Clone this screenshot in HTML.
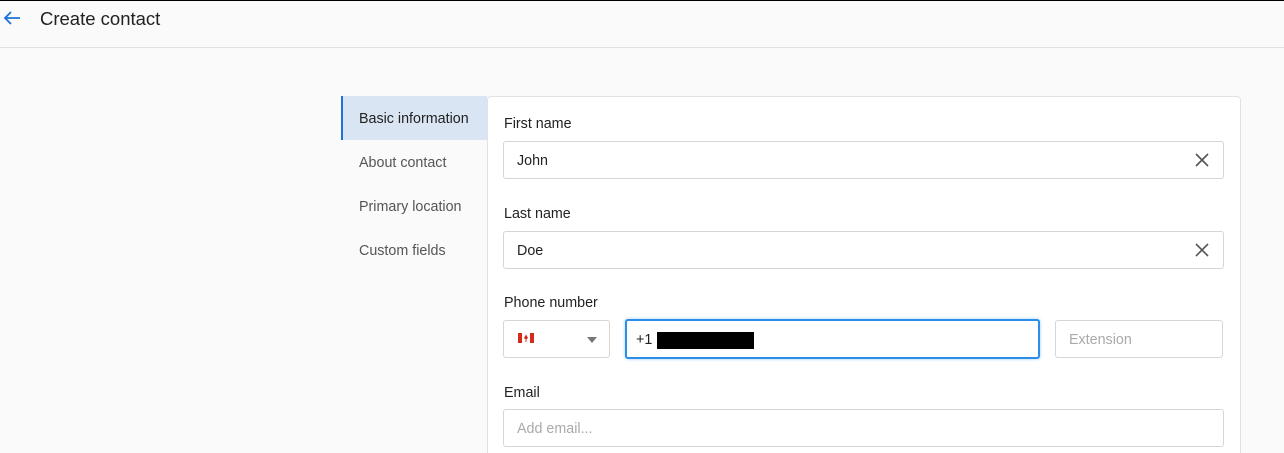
<!DOCTYPE html>
<html style="overflow:hidden;height:453px"><head><style>
*{box-sizing:border-box;margin:0;padding:0}
body{width:1284px;height:453px;overflow:hidden;background:#fafafa;font-family:"Liberation Sans",sans-serif;color:#222;position:relative}
.top{position:absolute;left:0;top:0;width:1284px;height:1px;background:#000}
.hdr{position:absolute;left:0;top:1px;width:1284px;height:47px;border-bottom:1px solid #e0e0e0}
.hdr h1{position:absolute;left:40px;top:7px;font-size:18.5px;font-weight:normal;color:#222}
.nav{position:absolute;left:341px;top:96px;width:146px}
.nav div{height:44px;line-height:46px;padding-left:18px;font-size:14.3px;color:#555}
.nav .act{background:#dae5f3;border-left:2px solid #1a73d9;padding-left:16px;color:#222}
.card{position:absolute;left:487px;top:96px;width:754px;height:370px;background:#fff;border:1px solid #e2e2e2;border-radius:4px}
.lbl{position:absolute;left:504px;font-size:14.3px;color:#222}
.in{position:absolute;height:38px;border:1px solid #d6d6d6;border-radius:3px;background:#fff;font-size:14.3px;line-height:38px;padding-left:13px}
.x{position:absolute;right:14px;top:11px}
</style></head><body>
<div class="top"></div>
<div class="hdr">
<svg style="position:absolute;left:3px;top:9px" width="18" height="16" viewBox="0 0 18 16"><path d="M17 8H2M8 2L2 8l6 6" stroke="#1a73d9" stroke-width="1.8" fill="none"/></svg>
<h1>Create contact</h1></div>
<div class="nav"><div class="act">Basic information</div><div>About contact</div><div>Primary location</div><div>Custom fields</div></div>
<div class="card"></div>
<div class="lbl" style="top:116px">First name</div>
<div class="in" style="left:503px;top:141px;width:721px">John<svg class="x" width="14" height="14" viewBox="0 0 14 14"><path d="M1 1l12 12M13 1L1 13" stroke="#555" stroke-width="1.6"/></svg></div>
<div class="lbl" style="top:206px">Last name</div>
<div class="in" style="left:503px;top:231px;width:721px">Doe<svg class="x" width="14" height="14" viewBox="0 0 14 14"><path d="M1 1l12 12M13 1L1 13" stroke="#555" stroke-width="1.6"/></svg></div>
<div class="lbl" style="top:295px">Phone number</div>
<div class="in" style="left:503px;top:320px;width:107px">
<svg style="position:absolute;left:14px;top:12px" width="16" height="10" viewBox="0 0 16 10"><rect width="16" height="10" fill="#d52b1e"/><rect x="4" width="8" height="10" fill="#fff"/><path d="M8 1.5l2 3.5-2 2-2-2z" fill="#d52b1e"/><rect x="7.5" y="7" width="1" height="2" fill="#d52b1e"/></svg>
<svg style="position:absolute;left:83px;top:16px" width="10" height="6"><path d="M0 0h10L5 6z" fill="#777"/></svg></div>
<div class="in" style="left:625px;top:319px;width:415px;height:40px;border:2px solid #2b8ee8;box-shadow:0 0 3px #9fcdf5;padding-left:9px">+1<span style="position:absolute;left:30px;top:11px;width:97px;height:17px;background:#000"></span></div>
<div class="in" style="left:1055px;top:320px;width:168px;color:#aaa">Extension</div>
<div class="lbl" style="top:385px">Email</div>
<div class="in" style="left:503px;top:409px;width:721px;color:#aaa">Add email...</div>
</body></html>
